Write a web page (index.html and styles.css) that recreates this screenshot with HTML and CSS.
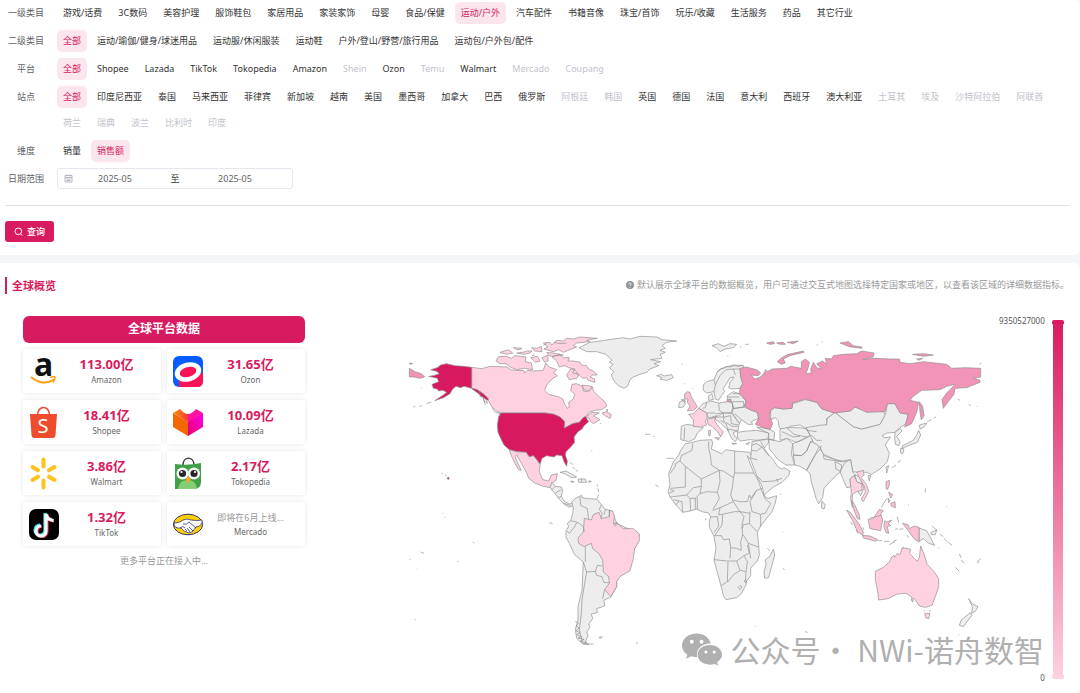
FILE: index.html
```html
<!DOCTYPE html>
<html lang="zh-CN">
<head>
<meta charset="utf-8">
<title>全球概览</title>
<link rel="stylesheet" href="styles.css">
</head>
<body>
<form class="card filters">
  <div class="row"><span class="label">一级类目</span><div class="options">
    <button type="button" class="opt">游戏/话费</button><button type="button" class="opt">3C数码</button><button type="button" class="opt">美容护理</button><button type="button" class="opt">服饰鞋包</button><button type="button" class="opt">家居用品</button><button type="button" class="opt">家装家饰</button><button type="button" class="opt">母婴</button><button type="button" class="opt">食品/保健</button><button type="button" class="opt active">运动/户外</button><button type="button" class="opt">汽车配件</button><button type="button" class="opt">书籍音像</button><button type="button" class="opt">珠宝/首饰</button><button type="button" class="opt">玩乐/收藏</button><button type="button" class="opt">生活服务</button><button type="button" class="opt">药品</button><button type="button" class="opt">其它行业</button>
  </div></div>
  <div class="row"><span class="label">二级类目</span><div class="options">
    <button type="button" class="opt active">全部</button><button type="button" class="opt">运动/瑜伽/健身/球迷用品</button><button type="button" class="opt">运动服/休闲服装</button><button type="button" class="opt">运动鞋</button><button type="button" class="opt">户外/登山/野营/旅行用品</button><button type="button" class="opt">运动包/户外包/配件</button>
  </div></div>
  <div class="row"><span class="label">平台</span><div class="options">
    <button type="button" class="opt active">全部</button><button type="button" class="opt">Shopee</button><button type="button" class="opt">Lazada</button><button type="button" class="opt">TikTok</button><button type="button" class="opt">Tokopedia</button><button type="button" class="opt">Amazon</button><button type="button" class="opt" disabled>Shein</button><button type="button" class="opt">Ozon</button><button type="button" class="opt" disabled>Temu</button><button type="button" class="opt">Walmart</button><button type="button" class="opt" disabled>Mercado</button><button type="button" class="opt" disabled>Coupang</button>
  </div></div>
  <div class="row"><span class="label">站点</span><div class="options">
    <button type="button" class="opt active">全部</button><button type="button" class="opt">印度尼西亚</button><button type="button" class="opt">泰国</button><button type="button" class="opt">马来西亚</button><button type="button" class="opt">菲律宾</button><button type="button" class="opt">新加坡</button><button type="button" class="opt">越南</button><button type="button" class="opt">美国</button><button type="button" class="opt">墨西哥</button><button type="button" class="opt">加拿大</button><button type="button" class="opt">巴西</button><button type="button" class="opt">俄罗斯</button><button type="button" class="opt" disabled>阿根廷</button><button type="button" class="opt" disabled>韩国</button><button type="button" class="opt">英国</button><button type="button" class="opt">德国</button><button type="button" class="opt">法国</button><button type="button" class="opt">意大利</button><button type="button" class="opt">西班牙</button><button type="button" class="opt">澳大利亚</button><button type="button" class="opt" disabled>土耳其</button><button type="button" class="opt" disabled>埃及</button><button type="button" class="opt" disabled>沙特阿拉伯</button><button type="button" class="opt" disabled>阿联酋</button><button type="button" class="opt" disabled>荷兰</button><button type="button" class="opt" disabled>瑞典</button><button type="button" class="opt" disabled>波兰</button><button type="button" class="opt" disabled>比利时</button><button type="button" class="opt" disabled>印度</button>
  </div></div>
  <div class="row"><span class="label">维度</span><div class="options">
    <button type="button" class="opt">销量</button><button type="button" class="opt active">销售额</button>
  </div></div>
  <div class="row"><label class="label" for="start">日期范围</label>
    <div class="range">
      <svg class="cal" viewBox="0 0 9 9" aria-hidden="true"><path d="M1 1.5h7v6.500H1zM1 3.500h7M3 .5v2M6 .5v2M2.500 5h4M2.500 6.500h4"/></svg>
      <input id="start" class="month" value="2025-05"><span class="to">至</span><input class="month" aria-label="结束月份" value="2025-05">
    </div>
  </div>
  <hr class="rule">
  <button type="button" class="query"><svg viewBox="0 0 9 9" aria-hidden="true"><circle cx="4.300" cy="4.300" r="3.300"/><path d="M6.600 6.800 8.300 8.600"/></svg>查询</button>
</form>

<main class="card overview">
  <header class="head">
    <h1 class="title">全球概览</h1>
    <p class="hint"><svg viewBox="0 0 8 8" aria-hidden="true"><circle cx="4" cy="4" r="4"/><path d="M2.900 3.200a1.100 1.100 0 1 1 1.700.9q-.6.4-.6.9M4 6v.6"/></svg>默认展示全球平台的数据概览，用户可通过交互式地图选择特定国家或地区，以查看该区域的详细数据指标。</p>
  </header>
  <div class="body">
    <section class="panel">
      <h2 class="panel-title">全球平台数据</h2>
      <div class="grid">
        <article class="shop"><svg class="logo" viewBox="0 0 30 32"><text class="logo-a" x="5" y="21">a</text><path d="M2 22q12 10 24 2" fill="none" stroke="#ff9d0a" stroke-width="2"/><path d="M21 22.500q5-2 5 0 0 2-2 5" fill="none" stroke="#ff9d0a" stroke-width="1.400"/></svg><div class="info"><strong>113.00亿</strong><span>Amazon</span></div></article>
        <article class="shop"><svg class="logo" viewBox="0 0 30 32"><rect y="1" width="30" height="31" rx="6" fill="#075cff"/><path d="M6 32V24L30 18v8q0 6-6 6z" fill="#fa1358"/><ellipse cx="15" cy="17" rx="13.500" ry="9.500" fill="#fff" transform="rotate(-15 15 17)"/><ellipse cx="15" cy="17" rx="8.500" ry="5" fill="#fa1358" transform="rotate(-15 15 17)"/></svg><div class="info"><strong>31.65亿</strong><span>Ozon</span></div></article>
        <article class="shop"><svg class="logo" viewBox="0 0 30 32"><path d="M1 8h27l-1.500 21q-.2 3-3 3h-18q-2.800 0-3-3z" fill="#ee4d2d"/><path d="M8.500 9c0-10 12-10 12 0" fill="none" stroke="#ee4d2d" stroke-width="1.600"/><text class="logo-s" x="8.500" y="27">S</text></svg><div class="info"><strong>18.41亿</strong><span>Shopee</span></div></article>
        <article class="shop"><svg class="logo" viewBox="0 0 30 32"><defs><linearGradient id="lz" x2="1"><stop stop-color="#ff9200"/><stop offset="1" stop-color="#f13b3b"/></linearGradient><linearGradient id="lp" x1="1" x2="0" y2="1"><stop stop-color="#ff00e5"/><stop offset="1" stop-color="#e5006c"/></linearGradient></defs><path d="M0 7 15 16V30L0 21z" fill="#f36800"/><path d="M0 7 7 3Q11 8 15 8l0 8z" fill="url(#lz)"/><path d="M15 8q4 0 8-5l7 4-15 10z" fill="#ff139e"/><path d="M30 7v14L15 30V16z" fill="url(#lp)"/></svg><div class="info"><strong>10.09亿</strong><span>Lazada</span></div></article>
        <article class="shop"><svg class="logo" viewBox="0 0 30 32"><g stroke="#ffc220" stroke-width="4" stroke-linecap="round"><path d="M14.500 2.500v7M14.500 23.500v7M3.500 10l5.500 3.300M20 19.700l5.500 3.300M25.500 10 20 13.300M9 19.700 3.500 23"/></g></svg><div class="info"><strong>3.86亿</strong><span>Walmart</span></div></article>
        <article class="shop"><svg class="logo" viewBox="0 0 30 32"><path d="M10 8C10-1 21-1 21 8" fill="none" stroke="#444" stroke-width="1.600"/><path d="M2 7q13 2 26-1v19q0 7-7 7H2z" fill="#42a047"/><path d="M5 32q1-9 10-9 8 0 9 9z" fill="#86cc75"/><circle cx="9.500" cy="16.500" r="6" fill="#fff"/><circle cx="21" cy="16.500" r="6" fill="#fff"/><circle cx="9.500" cy="16.500" r="3.600" fill="#272727"/><circle cx="21" cy="16.500" r="3.600" fill="#272727"/><circle cx="8.500" cy="15" r="1.100" fill="#fff"/><circle cx="22" cy="15" r="1.100" fill="#fff"/><path d="M15.200 19.500 18 22l-2.800 4-2.800-4z" fill="#f8a727"/></svg><div class="info"><strong>2.17亿</strong><span>Tokopedia</span></div></article>
        <article class="shop"><svg class="logo" viewBox="0 0 30 32"><rect y="1" width="30" height="31" rx="7" fill="#000"/><g fill="none" stroke-width="3.200"><path d="M16 5v17a5 5 0 1 1-5-5M16 5q1 6 7 6.500" stroke="#25f4ee"/><path d="M18 6.500v17a5 5 0 1 1-5-5M18 6.500q1 6 7 6.500" stroke="#fe2c55"/><path d="M17 6v17a5 5 0 1 1-5-5M17 6q1 6 7.500 6.500" stroke="#fff"/></g></svg><div class="info"><strong>1.32亿</strong><span>TikTok</span></div></article>
        <article class="shop"><svg class="logo" viewBox="0 0 30 32"><ellipse cx="15" cy="16.500" rx="14.600" ry="10.300" fill="#ffd100" stroke="#2d3277"/><path d="M1 15q6 0 9-3 4-2 8 0 6 1 11 0 1 6-6 7-3 6-7 6-5-1-8-5-7 1-7-5z" fill="#fff" stroke="#2d3277" stroke-width=".8"/><path d="M10 16q4 1 6-2l7 6M14 23l-2-2M17 24l-3-4M20 23l-4-4M7 20q3-3 5 0" fill="none" stroke="#2d3277" stroke-width=".8"/></svg><div class="info"><em>即将在6月上线...</em><span>Mercado</span></div></article>
      </div>
      <p class="more">更多平台正在接入中...</p>
    </section>

    <svg class="map" viewBox="-285 -39 2082 1134" role="img" aria-label="世界地图">
      <g class="land">
        <path class="mid" d="M28 130 45 140 64 146 74 156 60 160 42 156 28 156ZM28 114 38 116 30 118Z"/>
        <path d="M538 68 570 52 600 48 640 42 670 38 690 42 720 34 770 36 786 44 830 48 800 52 786 62 796 70 780 76 796 82 780 88 786 100 752 104 782 110 762 116 776 122 750 132 740 142 720 148 700 156 690 164 684 182 672 190 655 182 642 168 634 150 642 140 628 128 640 118 628 112 636 106 630 100 618 88 590 80 560 80Z"/>
        <path d="M770 152 784 148 792 153 815 149 820 158 800 166 780 163 786 158Z"/>
        <path class="low" d="M215 127 245 131 270 124 320 126 335 135 372 137 374 144 382 136 400 138 430 136 437 114 448 126 470 134 460 144 472 152 456 162 440 180 434 196 446 208 478 216 488 222 494 238 502 250 508 246 506 232 520 222 524 208 512 196 516 178 530 176 548 184 550 198 562 200 578 186 580 198 594 212 616 232 620 244 604 254 584 256 566 262 560 274 576 262 598 264 580 272 600 284 580 296 572 290 566 278 548 280 538 292 518 296 492 310 494 290 480 276 462 268 435 264 302 264 290 258 276 246 266 228 250 208 232 194 215 190Z"/>
        <path class="low" d="M288 108 296 95 318 94 334 100 345 92 378 96 376 110 394 114 398 134 374 130 350 134 330 126 318 116 300 116ZM455 60 470 46 490 48 500 40 520 42 540 36 592 40 560 46 570 50 530 54 520 62 530 66 514 72 490 82 476 74 460 80 432 72 444 66 430 54 450 52ZM456 96 478 88 490 98 508 98 504 108 520 108 540 112 544 120 560 122 566 132 580 138 592 150 578 150 570 156 584 162 584 172 564 166 560 158 548 160 536 148 518 144 524 132 506 128 494 122 478 126 470 108ZM500 150 512 132 524 134 536 150 530 160 508 164ZM392 98 412 94 420 108 406 112ZM426 98 444 90 444 108 434 112ZM300 82 325 74 338 84 320 88ZM340 68 366 70 354 75ZM350 84 370 88 390 84 396 78 380 78 368 82ZM394 68 410 70 424 64 426 80 404 78ZM440 82 460 84 490 90 450 94ZM546 180 576 184 568 198 552 194ZM606 264 616 262 622 252 622 262 634 268 630 280 618 274Z"/>
        <path class="high" d="M215 127 190 124 165 122 140 116 122 120 112 128 92 134 110 139 118 146 100 152 86 154 112 160 116 170 96 178 100 190 112 192 116 198 128 196 140 202 130 210 104 227 130 218 150 206 158 192 168 184 182 188 192 184 215 190 232 194 252 208 266 222 262 226 244 214 232 203 215 191ZM302 264 435 264 462 268 480 276 494 290 492 310 518 296 538 292 548 280 556 274 566 290 552 302 546 312 534 320 522 336 524 352 512 366 498 380 496 390 502 408 500 424 492 410 486 392 470 390 462 396 440 392 426 400 420 418 410 404 400 392 388 396 378 382 350 380 328 374 312 360 302 340 294 322 292 300 296 275ZM142 458 147 457 147 463 142 462Z"/>
        <path class="low" d="M328 374 350 380 378 382 388 396 400 392 410 404 420 418 418 440 428 464 446 468 454 450 472 446 468 466 456 474 450 488 430 484 404 474 386 460 380 444 366 418 350 390 346 396 352 412 364 436 356 434 344 414 334 392Z"/>
        <path d="M450 488 456 472 466 484 484 486 488 496 484 514 492 528 508 537 522 533 524 542 506 546 490 536 476 520 462 502ZM480 442 498 438 530 456 514 458 494 446ZM534 462 556 462 560 472 536 472ZM512 468 522 470 516 473ZM566 468 574 469 567 472Z"/>
        <path class="line" d="M466 484 454 496M484 494 466 504M484 514 474 518M545 460V472M510 412 518 418M518 426 524 432M528 434 532 440M592 478V484M594 490 596 502M596 508 592 520M40 246 46 245M58 244 66 242M80 236 94 231M64 188H66M124 444 128 446M135 449 140 453M232 194 240 204 240 214 250 216 252 228 262 234M250 220 256 240M258 226 264 236M276 248 286 262 298 264 302 272M430 60 440 56M396 92 404 90M462 52 480 56 500 54M574 377H577M600 296H603M845 118H848M852 176H854M878 190H880M735 328H750M760 334H764M800 400H822"/>
      </g>

      <g class="land" transform="translate(0 465)">
        <path d="M515 66 528 54 545 46 548 54 570 56 592 58 604 74 616 88 634 92 642 108 650 130 718 162 704 206 650 304 650 320 632 352 612 360 614 378 590 386 592 398 574 402 578 416 566 432 570 442 560 456 564 466 556 486 566 494 545 490 530 474 526 448 534 420 534 380 546 330 550 246 524 224 508 190 498 172 498 152 506 140 502 130 512 122 518 100 520 84Z"/>
        <path class="low" d="M553 115 574 120 580 104 597 97 604 116 628 110 628 92 636 92 644 108 640 128 654 132 670 146 700 146 718 162 718 182 704 206 700 236 690 272 660 290 650 304 650 320 632 350 614 328 628 310 626 290 610 276 608 240 596 220 578 206 574 190 552 200 536 190 534 174 550 156Z"/>
        <path class="line" d="M550 246 560 276 554 310 546 360 544 400 538 450 548 488M556 200V246M560 276 586 274 592 256 608 258M586 274 590 286 606 290 612 308 628 308M614 328 608 356M540 50 542 76 562 86 566 118M512 122 534 128 550 140 553 155M500 152 508 160 524 140 530 128M604 74 598 88 606 100 604 116M616 88 612 104M628 90V110M640 132 652 128 646 138ZM490 70 512 76M448 128 458 131M526 424 536 430 528 438 538 444 528 452 540 458 530 464 544 470 534 474 552 478 540 484 560 488 550 492 580 492M596 472 608 470M598 474H606M708 488 714 490M128 100H130M134 112H136M218 186 223 190M62 216 72 220M28 238H31M50 268H52M44 419H47M172 244H175M766 14 776 20"/>
      </g>

      <g class="land" transform="translate(720 0)">
        <path d="M136 356 150 354 180 346 215 344 218 354 214 372 244 386 258 374 284 378 330 382 336 398 330 402 322 392 328 410 340 440 356 470 366 500 374 514 384 520 410 512 406 534 396 560 378 582 360 606 352 622 356 660 358 690 352 708 332 730 332 752 320 768 318 780 304 806 290 818 258 824 250 812 244 786 234 750 222 706 228 670 222 634 208 606 208 588 212 576 206 564 186 560 170 552 150 558 128 562 108 540 90 516 84 500 90 480 86 446 100 410 116 390 122 376Z"/>
        <path d="M400 672 404 690 396 720 386 758 374 760 372 740 378 720 376 704 390 694Z"/>
        <path class="line" d="M158 356 156 376 124 392 120 408 106 416V424L90 446M120 408 136 424V486L92 490M136 424 184 462 238 436 214 420 212 396 206 370V350M184 462V484L160 488 140 510M184 484 180 506 200 500 232 502M238 436 240 470 232 502M238 436 250 438 280 458M284 378V444H342M284 444 280 458 278 484 272 510 280 530M280 525 300 530 322 530 328 510 332 520 350 496 366 490M350 496 330 530 336 560 362 568 376 564 392 536 374 520 368 500M362 568V606M330 560 328 596 352 620M280 530 300 560 330 565M280 530 240 548 236 570 284 560 300 560M232 502 238 520 218 556M240 548 220 556M248 568 246 600 232 620 224 632 244 632 250 644 268 642 272 668 290 670 304 676 302 650 308 630 306 600 312 575 300 560M306 600 328 596M310 630 325 655 356 666M272 668 270 700M222 704 262 708 290 708 312 692 328 684 322 660M264 710 262 770 244 782M290 708 300 736 280 750 262 772M300 736 318 740 322 710 312 692M325 655 332 700M318 740 316 772M212 576 232 575 236 604 222 622M128 562 126 530 100 524M152 558 150 520M166 552V520M172 554V518M90 516 108 514 140 510 150 520 166 520 180 506M108 540 116 528M90 494 104 498M88 504 100 500M304 610 312 604"/>
        <path d="M294 788 300 782 306 786 300 794ZM312 768 318 764 318 774Z"/>

        <path d="M190 180 200 170 222 164 232 140 246 130 280 120 310 122 312 130 300 132 302 156 308 176 300 190 276 192 266 188 270 172 282 156 270 158 262 172 250 190 254 200 244 212 236 226 226 222 222 200 200 204 190 196Z"/>
        <path d="M206 212 216 206 220 224 206 226ZM124 304 140 298 180 304 190 308 172 324 164 342 146 350 122 344ZM118 232 130 226 136 236 130 246 116 248Z"/>
        <path d="M176 250 188 236 200 232 212 228 236 234 262 230 276 232 280 250 276 262 250 264 230 266 226 276 204 278 200 264ZM262 226 262 212 280 200 298 206 306 214 318 228 312 246 280 250 276 232ZM276 252 312 246 330 254 352 262 356 280 334 290 338 298 324 298 304 284 298 296 276 262Z"/>
        <path d="M226 276 250 264 276 266 298 296 296 304 294 318 280 322 284 334 292 340 286 350 276 342 262 314 240 292 226 284ZM292 322 320 318 350 316 386 324 384 342 350 346 330 344 300 348 292 336ZM276 354 290 356 278 358ZM318 356 330 352 322 360Z"/>
        <path class="line" d="M134 308 132 344M222 164 226 180 222 200M226 180 240 152 258 134 280 132 286 150M280 132 300 132M236 234 238 256 250 264M200 264 226 264M216 276 250 276M276 232 280 250M262 216 298 216M278 206 300 206M312 246 310 230 278 230M250 264 252 292M252 276 272 272 274 296 296 300M258 292 276 304 294 304M262 312 294 318M200 232 196 248 188 250M304 284 284 266M242 286 258 296 266 320M232 140 240 132 250 130 258 124 270 126 282 122 296 124 310 120"/>
        <path class="pink" d="M134 206 142 200 150 202 154 216 164 232 172 246 160 256 142 258 150 244 142 232 144 222 134 222ZM124 224 134 224 136 232Z"/>
        <path class="low" d="M146 268 160 266 176 250 200 264 202 276 196 288 200 300 182 306 160 304 160 284Z"/>
        <path class="low" d="M202 282 226 278 224 288 236 306 250 320 242 336 236 324 216 304 204 298ZM224 338 238 338 236 345ZM206 316 212 316 210 332 206 332Z"/>
        <path d="M350 306 388 312 404 322 402 346 386 342 386 324 362 314ZM336 350 386 342 386 352 372 370 388 392 400 404 412 424 424 432 432 428 450 438 446 452 426 472 400 486 372 510 366 482 350 452 332 404 334 376ZM386 342 402 346 420 350 440 340 458 356 454 386 464 420 438 420 412 402 400 386 388 372ZM392 256 404 248 430 252 456 250 458 236 496 224 530 232 546 252 584 264 560 280 560 300 540 304 500 312 480 300 450 304 430 316 418 308 414 286 406 278 392 284Z"/>
        <path d="M420 312 440 308 480 308 500 312 530 304 548 308 530 324 500 336 470 352 440 340 420 346ZM458 356 490 344 514 330 540 336 512 350 500 378 484 392 460 390ZM460 390 484 392 500 378 512 350 540 360 524 392 514 410 500 436 480 424 464 420ZM500 436 514 410 524 392 540 372 556 394 604 410 640 406 632 420 618 440 596 444 570 470 552 490 548 518 536 536 528 520 514 470 510 446ZM546 528 556 540 552 552 544 548Z"/>
        <path d="M498 308 545 300 560 300 562 280 585 262 605 278 640 305 665 312 720 298 738 262 742 236 765 236 780 262 805 268 798 296 780 308 765 322 742 324 726 332 734 338 752 336 742 350 736 360 748 385 742 410 720 432 694 448 680 442 656 442 638 440 632 404 608 408 588 404 550 388 540 366 520 352 510 330Z"/>
        <path d="M585 262 630 258 645 246 680 258 730 258 735 270 720 298 665 312 640 305 605 278ZM632 404 638 440 646 450 630 462 632 486 620 488 608 460 600 440 615 412ZM585 410 605 420 602 440 588 432ZM645 450 660 455 672 490 662 512 654 500 664 476 650 472ZM765 322 780 310 786 318 770 334 780 350 776 362 766 358 764 340ZM838 300 860 294 852 306 840 312ZM836 316 842 330 832 352 810 360 786 370 788 362 820 346 830 330ZM782 370 792 372 788 386 782 384ZM738 426 746 422 740 444ZM684 452 692 450 688 468Z"/>
        <path class="line" d="M334 376 350 378 366 366 386 392M350 452 368 470 400 468 426 460M410 462 414 472M336 360 350 356 366 366M550 388 552 402 604 410M426 320 460 336 480 334M440 308 462 328 500 336M500 316 530 320M514 330 530 346 545 346M540 372 544 362M500 312 510 330M352 404 334 400M362 350 374 370"/>
        <path class="mid" d="M300 130 318 126 350 134 362 144 355 152 332 150 345 162 362 156 374 142 376 134 382 140 396 132 440 130 452 124 484 130 484 110 496 102 508 112 504 130 498 146 514 144 512 132 520 112 530 128 545 132 530 116 548 108 560 118 556 100 575 102 580 92 610 88 650 86 665 78 702 84 700 96 668 104 705 100 750 102 778 102 780 112 810 116 850 110 920 118 935 130 975 128 1022 130 1022 156 1000 160 1020 166 1020 172 980 188 945 190 942 208 924 230 910 250 906 224 920 204 946 178 920 184 900 194 845 196 820 214 810 226 836 232 830 262 815 296 794 306 805 268 780 264 765 236 742 236 735 260 680 262 645 246 630 258 584 264 546 252 530 232 496 222 458 234 456 250 430 252 404 248 392 256 388 274 398 296 390 314 366 306 346 298 356 280 352 262 330 254 314 244 318 228 306 214 298 206 300 190 308 176 302 156Z"/>
        <path class="mid" d="M412 110 425 98 445 88 490 78 492 82 450 92 430 102 436 114 424 118ZM600 54 625 50 640 62 665 66 666 70 632 66ZM818 88 850 86 880 90 850 94ZM830 102 848 100 836 106ZM838 230 848 244 852 272 844 284 840 262ZM380 54 400 50 404 56 390 58ZM410 54 430 52 436 58 420 58ZM442 52 475 48 460 56ZM262 224 272 222 274 230 262 230Z"/>
        <path class="low" d="M630 462 642 452 652 472 666 476 666 496 650 500 638 508 636 530 644 550 636 545 632 520 634 500ZM650 442 670 436 672 450 664 458 680 480 686 500 670 530 664 522 676 502 674 486 660 462Z"/>
        <path class="pink" d="M738 470 748 466 748 480 742 494 738 490Z"/>
        <path d="M216 62 234 56 252 64 270 56 290 58 280 68 256 72 240 80 230 68Z"/>
        <path class="line" d="M300 66H304M316 58H326M262 94H265M530 60H534M545 50H548M420 508H424M862 290 874 284M880 280 888 276M954 222 960 226M986 238 992 242M1010 244H1012M1018 118 1024 114M756 428 768 420M774 414 782 404M198 580 196 586M382 670 390 678M428 730 434 734M495 920 503 922M345 903H347M428 622H430"/>
      </g>

      <g class="land" transform="translate(1260 435)">
        <path class="low" d="M166 304 190 292 208 276 214 262 222 256 224 262 232 250 240 254 246 236 256 234 272 238 268 250 274 256 292 274 298 262 302 228 312 252 322 284 340 302 356 326 356 350 346 380 336 406 316 412 298 408 286 390 280 384 278 396 274 390 276 382 258 370 232 372 204 386 176 390 174 370 166 330Z"/>
        <path class="low" d="M314 430 330 430 326 446 318 444Z"/>
        <path d="M446 386 458 402 474 410 466 424 454 430 458 412ZM450 428 456 436 430 470 418 466 424 450ZM297 174 320 182 330 200 344 226 326 220 310 206 297 214ZM332 188 350 180 346 194 334 194Z"/>
        <path class="pink" d="M80 120 92 128 116 160 130 186 128 196 112 184 98 152ZM96 92 104 104 116 130 120 148 112 146 100 116ZM128 196 150 198 172 208 168 214 130 204ZM144 148 160 146 178 118 190 122 182 132 188 150 182 182 150 176ZM248 160 264 164 268 176 282 168 297 172 297 216 282 206 266 184ZM194 152 200 156 216 150 204 162 212 166 202 170 206 190 198 188 192 170ZM212 100 225 95 226 114 214 108ZM206 66 218 74 212 84ZM204 84 210 92 206 98Z"/>
        <path class="line" d="M150 144 184 136M184 112 200 86M172 212 186 212M192 214 208 214M208 224 226 214M220 214 230 210M232 140 236 158M226 178 234 176M238 178 250 176M262 196 266 202M128 172 132 180M108 180 114 190M92 156 98 166M336 168 352 182M360 192 370 200M372 206 382 214M384 216 396 226M418 252 424 264M424 270 432 280M406 292 418 304M470 276 482 266M472 280 478 276M316 56V68M264 106 267 104M378 110H380M354 236 358 232M310 420 314 424M330 420V426M244 236 252 230M416 494H418"/>
      </g>
    </svg>

    <div class="legend"><div class="values"><span>9350527000</span><span>0</span></div><div class="bar"></div></div>
  </div>
  <div class="mark"><svg viewBox="0 0 42 33" aria-hidden="true"><path d="M15 0C6.500 0 0 5.500 0 12.500c0 4 2 7.300 5.500 9.500L4 26l5.500-2.500q3 1 6 .8C14 16 21 10 29.500 10.500 28 4 22 0 15 0z"/><path d="M28.500 12C21.500 12 16 16.300 16 22s5.500 10 12.500 10q2.500 0 4.500-.7l4 1.700-1-3.500c3-1.800 5-4.500 5-7.500 0-5.700-5.500-10-12.500-10z"/><g fill="#fff"><circle cx="10" cy="8.500" r="2"/><circle cx="20" cy="8.500" r="2"/><circle cx="24.500" cy="19" r="1.600"/><circle cx="33" cy="19" r="1.600"/></g></svg><span>公众号· NWi-诺舟数智</span></div>
</main>
</body>
</html>
```
FILE: styles.css
```css
* { box-sizing: border-box; }
body { margin: 0; background: #f5f6f8; color: #333; font: 9px/16px "Noto Sans", "Noto Sans CJK SC", sans-serif; }
button, input { font: inherit; color: inherit; }
h1, h2, p { margin: 0; }
.card { background: #fff; border-radius: 0 6px 6px 0; }

.filters { padding: 2px 11px 13px 0; margin-bottom: 8px; display: flex; flex-direction: column; gap: 6px; }
.row { display: flex; }
.label { flex: none; width: 52px; margin-right: 5px; text-align: center; line-height: 22px; color: #606266; }
.options { display: flex; flex-wrap: wrap; gap: 4px; }
.opt { height: 22px; padding: 0 6px; border: 0; border-radius: 5px; background: none; line-height: 22px; white-space: nowrap; cursor: pointer; }
.opt.active { background: #fce6ee; color: #d81b60; }
.opt:disabled { color: #bfc3cb; cursor: default; }
.range { display: flex; align-items: center; width: 236px; height: 21px; padding: 0 6px; border: 1px solid #e4e7ed; border-radius: 3px; }
.cal { width: 9px; height: 9px; fill: none; stroke: #b4b7bd; stroke-width: 1; }
.month { width: 84px; padding: 0; border: 0; outline: 0; background: none; text-align: center; color: #606266; }
.to { width: 36px; text-align: center; }
.rule { align-self: stretch; height: 1px; margin: 9px 0 0 5px; border: 0; background: #dcdfe6; }
.query { display: flex; align-items: center; justify-content: center; gap: 4px; width: 49px; height: 21px; margin: 9px 0 0 5px; padding: 0; border: 0; border-radius: 3px; background: #d81b60; color: #fff; font-weight: 500; }
.query svg { width: 9px; height: 9px; fill: none; stroke: #fff; stroke-width: 1; }

.overview { position: relative; padding: 12px 11px 3px 5px; }
.head { display: flex; justify-content: space-between; align-items: center; height: 20px; margin-bottom: 17px; }
.title { padding-left: 5px; border-left: 2px solid #d81b60; color: #d81b60; font-size: 11px; font-weight: 700; line-height: 17px; }
.hint { display: flex; align-items: center; gap: 3px; color: #999; }
.hint svg { width: 8px; height: 8px; fill: #909399; }
.hint path { fill: none; stroke: #fff; stroke-width: 1; }
.body { display: flex; align-items: flex-start; padding-right: 5px; }
.panel { flex: none; width: 282px; margin: 4px 0 0 18px; }
.panel-title { height: 27px; border-radius: 6px; background: #d81b60; color: #fff; font-size: 12px; font-weight: 700; line-height: 26px; text-align: center; }
.grid { display: grid; grid-template-columns: 1fr 1fr; gap: 7px 6px; margin-top: 6px; }
.shop { display: flex; align-items: center; height: 44px; padding: 0 0 0 6px; border-radius: 2px; background: #fff; box-shadow: 0 0 5px #0000001a; }
.logo { flex: none; width: 30px; height: 32px; overflow: visible; }
.logo-a { font: 700 32px "Noto Sans"; fill: #111; }
.logo-s { font: 400 20px "Noto Sans"; fill: #fff; }
.info { flex: 1; display: flex; flex-direction: column; align-items: center; padding-right: 7px; }
.info strong { color: #d81b60; font-size: 13px; line-height: 17px; }
.info em { color: #999; font-style: normal; line-height: 15px; }
.info span { color: #666; font-size: 8px; line-height: 13px; }
.more { margin-top: 7px; color: #999; text-align: center; }

.map { flex: 1; min-width: 0; height: auto; }
.land { fill: #ededed; stroke: #8e8e8e; stroke-width: 2; stroke-linejoin: round; }
.line { fill: none; }
.low { fill: #ffd1e1; }
.pink { fill: #fcc0d5; }
.mid { fill: #f294b7; }
.high { fill: #d8195f; }
.legend { flex: none; display: flex; align-self: stretch; justify-content: flex-end; gap: 7px; width: 65px; padding: 8px 0 11px; }
.values { display: flex; flex-direction: column; justify-content: space-between; align-items: flex-end; margin: -7px 0; color: #555; font-size: 8px; }
.bar { width: 15px; border: solid transparent; border-width: 0 1px; border-radius: 2px; background: linear-gradient(#d81b60, #d81b60) top / 100% 4px no-repeat border-box, linear-gradient(#ffd1e1, #ffd1e1) bottom / 100% 4px no-repeat border-box, linear-gradient(#d81b60, #ffd1e1) padding-box; }
.mark { position: absolute; right: 36px; bottom: 24px; display: flex; align-items: center; gap: 8px; color: #b0b0b0; font: 30px/40px "Noto Sans CJK SC", sans-serif; }
.mark svg { width: 41px; height: 33px; fill: #b0b0b0; }
```
